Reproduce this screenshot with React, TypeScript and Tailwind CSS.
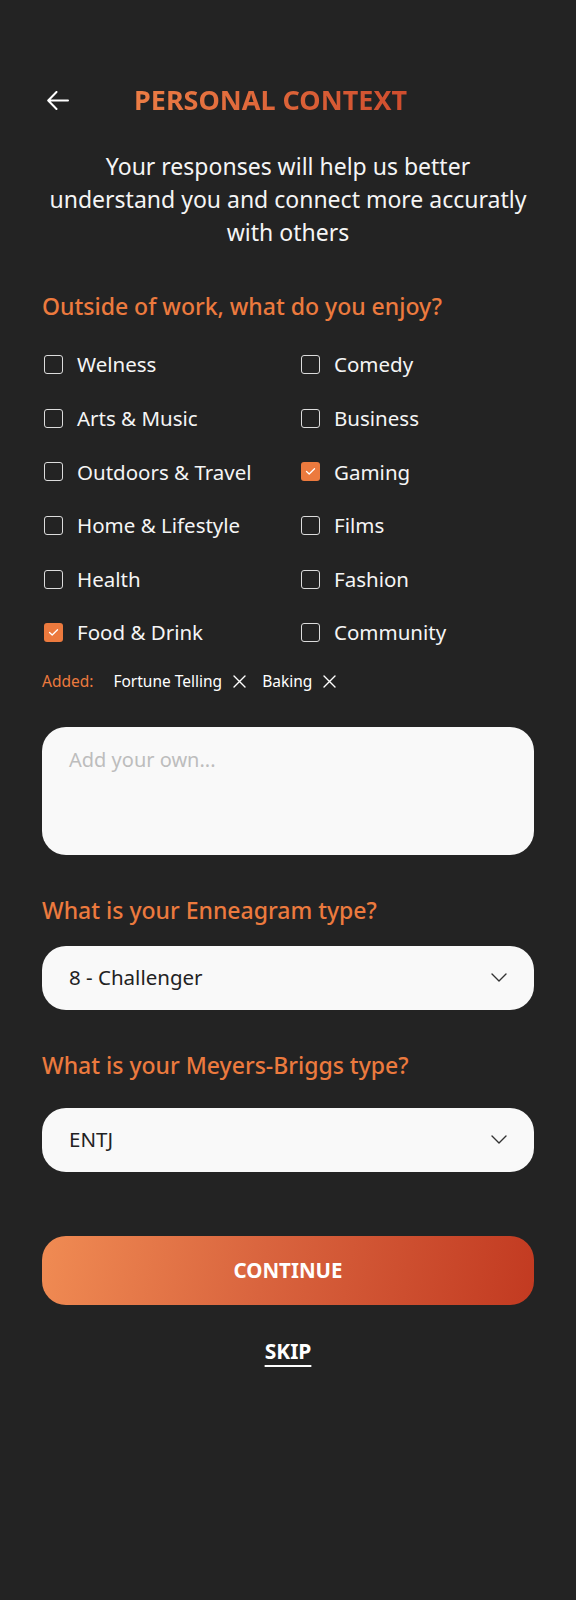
import React, { useState } from 'react';

const LEFT = ['Welness', 'Arts & Music', 'Outdoors & Travel', 'Home & Lifestyle', 'Health', 'Food & Drink'];
const RIGHT = ['Comedy', 'Business', 'Gaming', 'Films', 'Fashion', 'Community'];

const Checkbox: React.FC<{ checked: boolean }> = ({ checked }) =>
  checked ? (
    <span className="flex h-[19px] w-[19px] items-center justify-center rounded-[3px] bg-[#ec7a3e]">
      <svg width="11" height="9" viewBox="0 0 11 9" fill="none">
        <path d="M1.5 4.5L4.2 7L9.5 1.8" stroke="#fff" strokeWidth="1.3" strokeLinecap="round" strokeLinejoin="round" />
      </svg>
    </span>
  ) : (
    <span className="block h-[19px] w-[19px] rounded-[3px] border-[1.5px] border-[#dcdcdc]" />
  );

const Chevron: React.FC = () => (
  <svg width="16" height="9" viewBox="0 0 16 9" fill="none">
    <path d="M1 1L8 8L15 1" stroke="#333" strokeWidth="1.4" strokeLinecap="round" strokeLinejoin="round" />
  </svg>
);

const XIcon: React.FC = () => (
  <svg width="13" height="13" viewBox="0 0 13 13" fill="none">
    <path d="M1 1L12 12M12 1L1 12" stroke="#fff" strokeWidth="1.4" strokeLinecap="round" />
  </svg>
);

const App: React.FC = () => {
  const [checked, setChecked] = useState<string[]>(['Gaming', 'Food & Drink']);

  const toggle = (name: string) =>
    setChecked(prev => (prev.includes(name) ? prev.filter(n => n !== name) : [...prev, name]));

  const rows = LEFT.map((l, i) => [l, RIGHT[i]]);

  return (
    <div className="min-h-[1600px] bg-[#232323] px-[42px] pt-[80px] text-white [font-family:'Noto_Sans',sans-serif]">
      {/* header */}
      <div className="flex h-[40px] items-center">
        <button className="ml-[5px] flex h-[40px] w-[22px] items-center">
          <svg width="22" height="19" viewBox="0 0 22 19" fill="none">
            <path d="M21 9.5H1.5M9.5 1L1.2 9.5L9.5 18" stroke="#fff" strokeWidth="2" strokeLinecap="round" strokeLinejoin="round" />
          </svg>
        </button>
        <h1 className="ml-[65px] bg-gradient-to-r from-[#ec7d45] to-[#cf4d2e] bg-clip-text text-[27px] font-bold text-transparent">
          PERSONAL CONTEXT
        </h1>
      </div>

      <p className="mt-[30px] text-center text-[23px] leading-[33px] text-[#f5f5f5]">
        Your responses will help us better understand you and connect more accuratly with others
      </p>

      <h2 className="mt-[42px] text-[23px] leading-[30px] font-medium text-[#ec7a3e]">
        Outside of work, what do you enjoy?
      </h2>

      <div className="mt-[17px]">
        {rows.map(row => (
          <div key={row[0]} className="grid h-[53.6px] grid-cols-[257px_1fr] items-center pl-[2px]">
            {row.map(name => (
              <label key={name} className="flex cursor-pointer items-center gap-[14px]" onClick={() => toggle(name)}>
                <Checkbox checked={checked.includes(name)} />
                <span className="text-[20.5px] text-[#f5f5f5]">{name}</span>
              </label>
            ))}
          </div>
        ))}
      </div>

      <div className="mt-[11px] flex h-[22px] items-center text-[15.5px]">
        <span className="text-[#ec7a3e]">Added:</span>
        <span className="ml-[20px]">Fortune Telling</span>
        <span className="ml-[11px]"><XIcon /></span>
        <span className="ml-[16px]">Baking</span>
        <span className="ml-[11px]"><XIcon /></span>
      </div>

      <textarea
        placeholder="Add your own..."
        className="mt-[34px] block h-[128px] w-full resize-none rounded-[24px] bg-[#f9f9f9] px-[27px] py-[18px] text-[20px] text-[#333] placeholder:text-[#bdbdbd] outline-none"
      />

      <h2 className="mt-[40px] text-[23px] leading-[30px] font-medium text-[#ec7a3e]">What is your Enneagram type?</h2>
      <div className="mt-[21px] flex h-[64px] items-center justify-between rounded-[24px] bg-[#f9f9f9] pl-[27px] pr-[27px]">
        <span className="text-[20.5px] text-[#222]">8 - Challenger</span>
        <Chevron />
      </div>

      <h2 className="mt-[40px] text-[23px] leading-[30px] font-medium text-[#ec7a3e]">What is your Meyers-Briggs type?</h2>
      <div className="mt-[28px] flex h-[64px] items-center justify-between rounded-[24px] bg-[#f9f9f9] pl-[27px] pr-[27px]">
        <span className="text-[20.5px] text-[#222]">ENTJ</span>
        <Chevron />
      </div>

      <button className="mt-[64px] flex h-[69px] w-full items-center justify-center rounded-[24px] bg-[linear-gradient(100deg,#f08b53_0%,#d9643e_45%,#c23a21_100%)] text-[20.5px] font-bold text-white">
        CONTINUE
      </button>

      <div className="mt-[32px] flex justify-center">
        <button className="text-[21px] leading-[28px] font-bold underline decoration-2 underline-offset-[6px]">SKIP</button>
      </div>
    </div>
  );
};

export default App;
